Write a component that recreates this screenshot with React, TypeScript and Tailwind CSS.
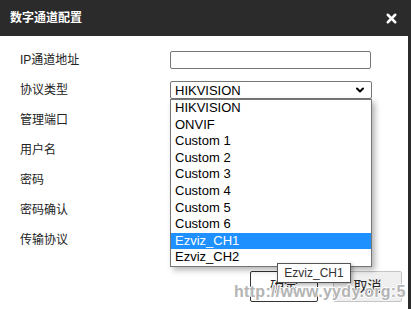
import React from 'react';
import { X, ChevronDown } from 'lucide-react';

const font = { fontFamily: '"Liberation Sans", "Noto Sans CJK SC", sans-serif' };

const labels = ['IP通道地址', '协议类型', '管理端口', '用户名', '密码', '密码确认', '传输协议'];

const options = [
  'HIKVISION',
  'ONVIF',
  'Custom 1',
  'Custom 2',
  'Custom 3',
  'Custom 4',
  'Custom 5',
  'Custom 6',
  'Ezviz_CH1',
  'Ezviz_CH2',
];

const App: React.FC = () => {
  const selected = 'Ezviz_CH1';

  return (
    <div className="relative w-[411px] h-[309px] overflow-hidden bg-[#2b2b2b]" style={font}>
      {/* Header */}
      <div className="h-[36px] flex items-center justify-between pl-[10px] pr-[12px]">
        <span className="text-white text-[12px] font-bold">数字通道配置</span>
        <X className="w-[15px] h-[15px] text-white" strokeWidth={4} />
      </div>

      {/* Body */}
      <div className="w-[408px] h-[273px] bg-white pt-[9px]">
        {labels.map((label, i) => (
          <div key={label} className="h-[30px] flex items-center">
            <div className="w-[170px] pl-[20px] text-[12px] text-[#222]">{label}</div>
            {i === 1 ? (
              <div className="relative">
                <div className="w-[202px] h-[18px] border border-[#767676] rounded-[2px] bg-white flex items-center justify-between pl-[4px] pr-[5px]">
                  <span className="text-[13px] leading-none text-[#000]">HIKVISION</span>
                  <ChevronDown className="w-[12px] h-[12px] text-black" strokeWidth={4} />
                </div>
                {/* open list */}
                <div className="absolute left-0 top-[18px] z-10 w-[202px] border border-[#767676] bg-white shadow-[3px_3px_6px_rgba(0,0,0,0.3)]">
                  {options.map((opt) => (
                    <div
                      key={opt}
                      className={`h-[16.6px] leading-[16.6px] pl-[4px] text-[13px] ${
                        opt === selected ? 'bg-[#1e90ff] text-white' : 'text-black'
                      }`}
                    >
                      {opt}
                    </div>
                  ))}
                </div>
              </div>
            ) : (
              <div className="w-[201px] h-[18px] border border-[#767676] rounded-[2px] bg-white" />
            )}
          </div>
        ))}

        {/* Buttons */}
        <div className="flex justify-end gap-[15px] pr-[6px] mt-[16px]">
          <button className="w-[68px] h-[31px] border border-[#333] rounded-[2px] bg-white text-[14px] text-[#222]">
            确定
          </button>
          <button className="w-[69px] h-[31px] border border-[#c4c4c4] rounded-[2px] bg-[#efefef] text-[14px] text-[#222]">
            取消
          </button>
        </div>
      </div>

      {/* Tooltip */}
      <div className="absolute left-[277px] top-[263px] z-20 w-[74px] h-[20px] border border-[#555] bg-white shadow-[2px_2px_4px_rgba(0,0,0,0.3)] flex items-center justify-center text-[12px] text-[#333]">
        Ezviz_CH1
      </div>

      {/* Watermark */}
      <div
        className="absolute left-[234px] top-[284px] z-30 text-[16px] font-bold text-[#b4b4b4] leading-none tracking-[0.3px]"
        style={{ textShadow: '1px 0 0 #fff, -1px 0 0 #fff, 0 1px 0 #fff, 0 -1px 0 #fff' }}
      >
        http://www.yydy.org:5
      </div>
    </div>
  );
};

export default App;
